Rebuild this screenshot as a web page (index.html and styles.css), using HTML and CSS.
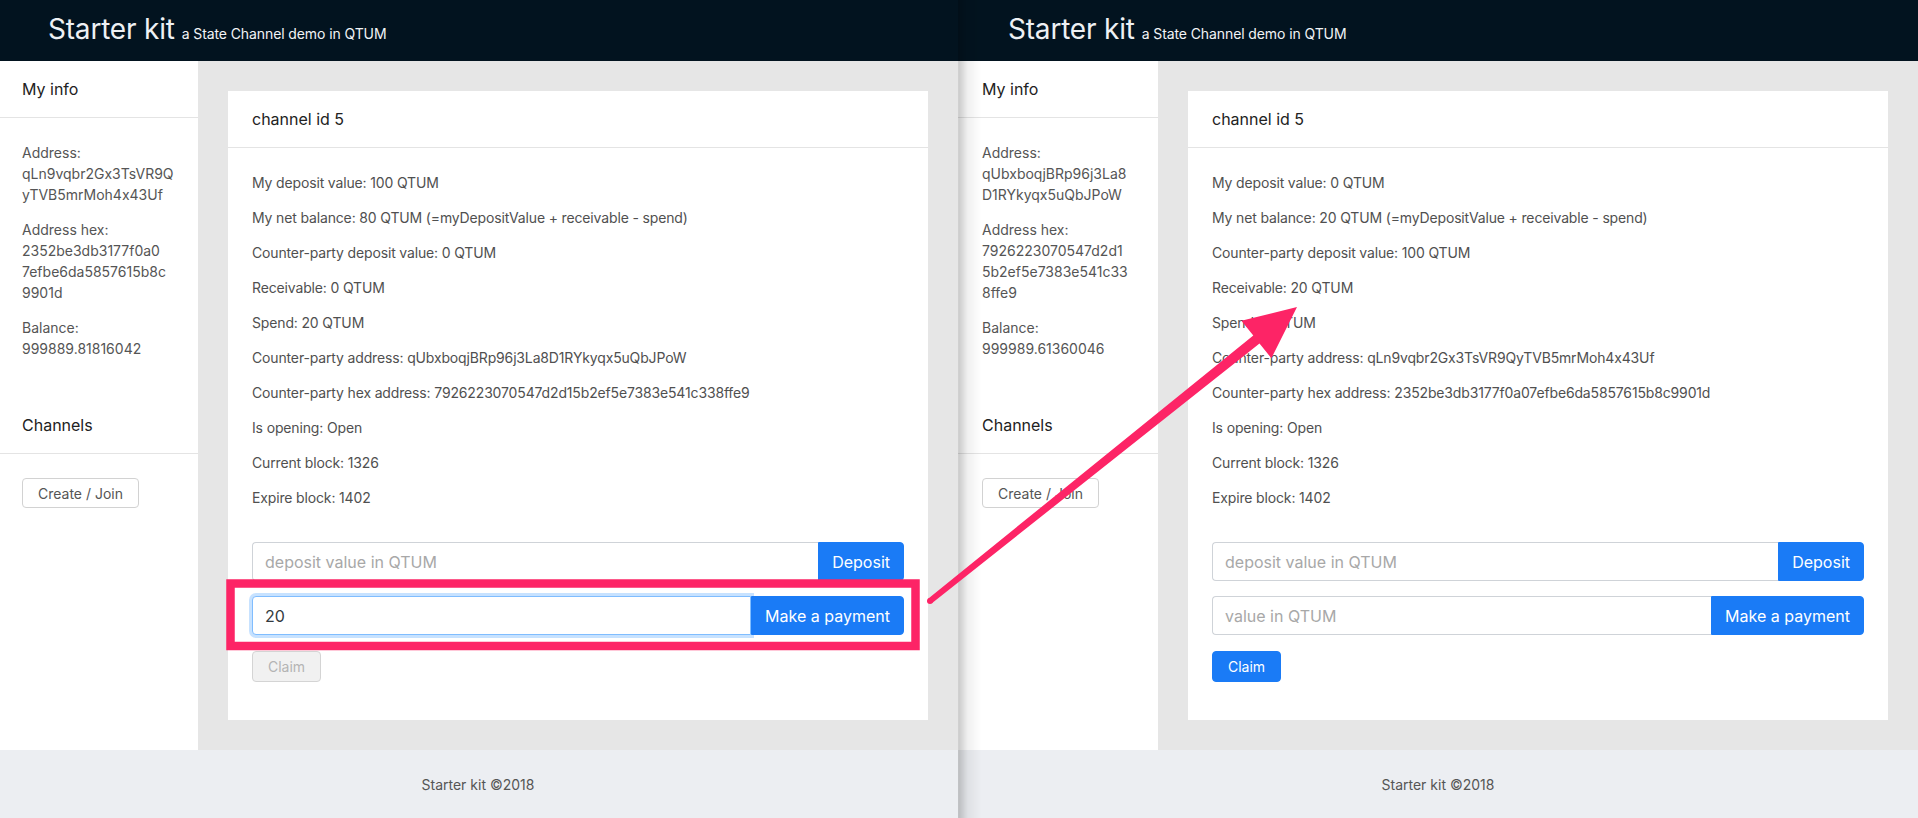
FILE: index.html
```html
<!DOCTYPE html>
<html lang="en">
<head>
<meta charset="utf-8">
<title>Starter kit – State Channel demo</title>
<link rel="stylesheet" href="styles.css">
</head>
<body>
<div class="screen">
  <section class="pane pane-left">
    <header class="topbar"><span class="brand">Starter kit</span><span class="tagline">a State Channel demo in QTUM</span></header>
    <div class="layout">
      <aside class="sider">
        <div class="sider-title">My info</div>
        <div class="sider-body">
          <p>Address:<br>qLn9vqbr2Gx3TsVR9Q<br>yTVB5mrMoh4x43Uf</p>
          <p>Address hex:<br>2352be3db3177f0a0<br>7efbe6da5857615b8c<br>9901d</p>
          <p>Balance:<br>999889.81816042</p>
        </div>
        <div class="sider-title">Channels</div>
        <div class="sider-body">
          <button class="btn-outline" type="button">Create / Join</button>
        </div>
      </aside>
      <main class="content">
        <div class="card">
          <div class="card-header">channel id 5</div>
          <div class="card-body">
            <p>My deposit value: 100 QTUM</p>
            <p>My net balance: 80 QTUM (=myDepositValue + receivable - spend)</p>
            <p>Counter-party deposit value: 0 QTUM</p>
            <p>Receivable: 0 QTUM</p>
            <p>Spend: 20 QTUM</p>
            <p>Counter-party address: qUbxboqjBRp96j3La8D1RYkyqx5uQbJPoW</p>
            <p>Counter-party hex address: 7926223070547d2d15b2ef5e7383e541c338ffe9</p>
            <p>Is opening: Open</p>
            <p>Current block: 1326</p>
            <p>Expire block: 1402</p>
            <div class="actions">
              <div class="input-group">
                <input class="field" type="text" placeholder="deposit value in QTUM">
                <button class="btn-primary" type="button">Deposit</button>
              </div>
              <div class="input-group">
                <input class="field is-focused" type="text" value="20" placeholder="value in QTUM">
                <button class="btn-primary" type="button">Make a payment</button>
              </div>
              <button class="btn-claim is-disabled" type="button">Claim</button>
            </div>
          </div>
        </div>
      </main>
    </div>
    <footer class="footer">Starter kit ©2018</footer>
  </section>

  <section class="pane pane-right">
    <header class="topbar"><span class="brand">Starter kit</span><span class="tagline">a State Channel demo in QTUM</span></header>
    <div class="layout">
      <aside class="sider">
        <div class="sider-title">My info</div>
        <div class="sider-body">
          <p>Address:<br>qUbxboqjBRp96j3La8<br>D1RYkyqx5uQbJPoW</p>
          <p>Address hex:<br>7926223070547d2d1<br>5b2ef5e7383e541c33<br>8ffe9</p>
          <p>Balance:<br>999989.61360046</p>
        </div>
        <div class="sider-title">Channels</div>
        <div class="sider-body">
          <button class="btn-outline" type="button">Create / Join</button>
        </div>
      </aside>
      <main class="content">
        <div class="card">
          <div class="card-header">channel id 5</div>
          <div class="card-body">
            <p>My deposit value: 0 QTUM</p>
            <p>My net balance: 20 QTUM (=myDepositValue + receivable - spend)</p>
            <p>Counter-party deposit value: 100 QTUM</p>
            <p>Receivable: 20 QTUM</p>
            <p>Spend: 0 QTUM</p>
            <p>Counter-party address: qLn9vqbr2Gx3TsVR9QyTVB5mrMoh4x43Uf</p>
            <p>Counter-party hex address: 2352be3db3177f0a07efbe6da5857615b8c9901d</p>
            <p>Is opening: Open</p>
            <p>Current block: 1326</p>
            <p>Expire block: 1402</p>
            <div class="actions">
              <div class="input-group">
                <input class="field" type="text" placeholder="deposit value in QTUM">
                <button class="btn-primary" type="button">Deposit</button>
              </div>
              <div class="input-group">
                <input class="field" type="text" placeholder="value in QTUM">
                <button class="btn-primary" type="button">Make a payment</button>
              </div>
              <button class="btn-claim is-primary" type="button">Claim</button>
            </div>
          </div>
        </div>
      </main>
    </div>
    <footer class="footer">Starter kit ©2018</footer>
  </section>

  <svg class="annotation" width="1918" height="818" viewBox="0 0 1918 818" aria-hidden="true">
    <rect x="230.5" y="583.5" width="685" height="62.5" fill="none" stroke="#fd2466" stroke-width="8.5"/>
    <circle cx="930" cy="601" r="3" fill="#fd2466"/>
    <polygon fill="#fd2466" points="931.9,603.3 1259.5,343.4 1271.4,358.2 1297,307 1241.4,320.8 1253.3,335.6 928.1,598.7"/>
  </svg>
</div>
</body>
</html>
```

FILE: styles.css
```css
html, body {
  margin: 0;
  padding: 0;
  height: 100%;
  overflow: hidden;
}

body {
  font-family: Inter, "Liberation Sans", Arial, sans-serif;
  font-feature-settings: "calt" 0;
  background: #ffffff;
  -webkit-font-smoothing: antialiased;
}

.screen {
  position: relative;
  display: flex;
  width: 1918px;
  height: 818px;
  overflow: hidden;
}

.pane {
  position: relative;
  flex: none;
  width: 960px;
  display: flex;
  flex-direction: column;
}

.pane-left {
  margin-left: -2px;
}

.pane-right::before {
  content: "";
  position: absolute;
  top: 0;
  bottom: 0;
  left: 0;
  width: 22px;
  background: linear-gradient(to right, rgba(0, 0, 0, 0.2), rgba(0, 0, 0, 0.06) 40%, rgba(0, 0, 0, 0));
  border-left: 1px solid rgba(0, 0, 0, 0.18);
  pointer-events: none;
  z-index: 3;
}

/* header */
.topbar {
  flex: none;
  height: 61px;
  padding: 0 50px;
  background: #02131f;
  display: flex;
  align-items: baseline;
  line-height: 59px;
  color: #ffffff;
}

.brand {
  font-size: 28px;
  color: #eef1f4;
  margin-right: 7px;
  letter-spacing: -0.2px;
}

.tagline {
  font-size: 14px;
  color: #f2f4f6;
  letter-spacing: -0.1px;
}

/* middle */
.layout {
  flex: none;
  display: flex;
}

.sider {
  flex: none;
  width: 200px;
  background: #ffffff;
}

.sider-title {
  padding: 16px 24px;
  line-height: 24px;
  font-size: 16px;
  color: #222222;
  border-bottom: 1px solid #e4e4e4;
}

.sider-body {
  padding: 24px;
}

.sider-body p {
  margin: 0 0 14px;
  font-size: 14px;
  line-height: 21px;
  color: #555555;
  white-space: nowrap;
}

.btn-outline {
  height: 30px;
  padding: 0 15px;
  border: 1px solid #d2d2d2;
  border-radius: 4px;
  background: #ffffff;
  font-family: inherit;
  font-feature-settings: "calt" 0;
  font-size: 14px;
  color: #555555;
}

.content {
  flex: 1;
  background: #e6e6e6;
  padding: 30px;
}

.card {
  background: #ffffff;
}

.card-header {
  padding: 16px 24px;
  line-height: 24px;
  font-size: 16px;
  color: #222222;
  border-bottom: 1px solid #e4e4e4;
}

.card-body {
  padding: 24px 24px 38px;
}

.card-body p {
  margin: 0 0 14px;
  font-size: 14px;
  line-height: 21px;
  color: #505050;
  letter-spacing: -0.15px;
}

.actions {
  margin-top: 34px;
  display: flex;
  flex-direction: column;
  align-items: flex-start;
}

.input-group {
  display: flex;
  width: 100%;
  height: 39px;
  margin-bottom: 15px;
}

.input-group + .input-group {
  margin-bottom: 16px;
}

.field {
  flex: 1;
  min-width: 0;
  box-sizing: border-box;
  height: 100%;
  margin: 0;
  padding: 0 12px;
  border: 1px solid #cfd3d8;
  border-right: 0;
  border-radius: 4px 0 0 4px;
  background: #ffffff;
  font-family: inherit;
  font-feature-settings: "calt" 0;
  font-size: 16px;
  color: #333a40;
  outline: none;
}

.field::placeholder {
  color: #a8a8a8;
}

.field.is-focused {
  border: 1px solid #80bdff;
  box-shadow: 0 0 0 3px rgba(0, 123, 255, 0.22);
}

.btn-primary {
  flex: none;
  height: 100%;
  margin: 0;
  padding: 0 13px;
  border: 1px solid #1a7bf6;
  border-radius: 0 4px 4px 0;
  background: #1a7bf6;
  font-family: inherit;
  font-feature-settings: "calt" 0;
  font-size: 16px;
  color: #ffffff;
}

.btn-claim {
  height: 31px;
  padding: 0 15px;
  border-radius: 4px;
  font-family: inherit;
  font-feature-settings: "calt" 0;
  font-size: 14px;
}

.btn-claim.is-disabled {
  border: 1px solid #d4d4d4;
  background: #f1f1f1;
  color: #b4b4b4;
}

.btn-claim.is-primary {
  border: 1px solid #1a7bf6;
  background: #1a7bf6;
  color: #ffffff;
}

.footer {
  flex: none;
  padding: 24px 50px;
  line-height: 21px;
  font-size: 14px;
  text-align: center;
  background: #eceef2;
  color: #555555;
}

.annotation {
  position: absolute;
  top: 0;
  left: 0;
  z-index: 5;
  pointer-events: none;
}
```
